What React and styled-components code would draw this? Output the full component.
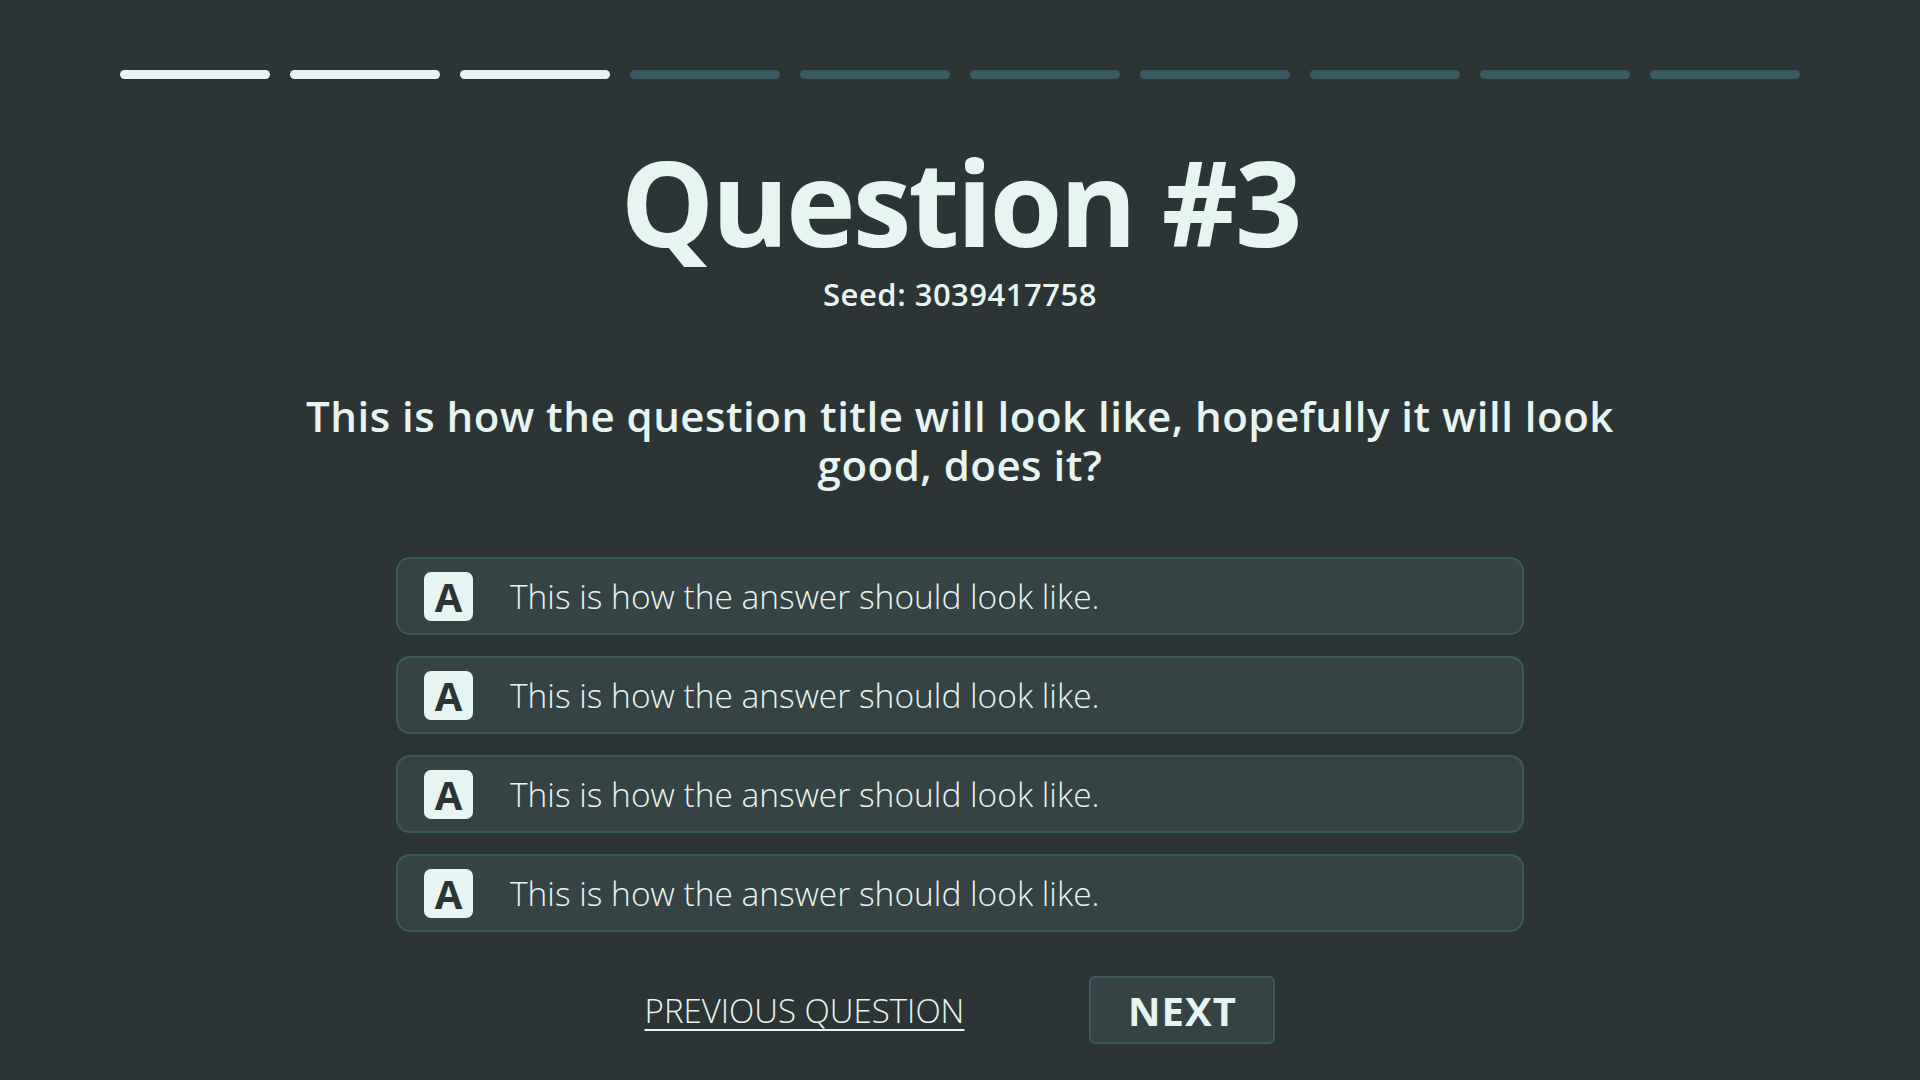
import React from "react";
import styled, { createGlobalStyle } from "styled-components";

const GlobalStyle = createGlobalStyle`
  html, body {
    margin: 0;
    padding: 0;
    background: #2c3435;
  }
  body {
    font-family: "Open Sans", "Noto Sans", sans-serif;
    color: #e6f5f2;
  }
`;

const Page = styled.main`
  width: 1920px;
  height: 1080px;
  box-sizing: border-box;
  padding: 70px 120px 0;
  display: flex;
  flex-direction: column;
  align-items: center;
`;

const Progress = styled.div`
  width: 100%;
  display: grid;
  grid-template-columns: repeat(10, 1fr);
  gap: 20px;
`;

const Step = styled.div`
  height: 9px;
  border-radius: 5px;
  background: ${p => (p.done ? "#e6f5f2" : "#3a5a62")};
`;

const Title = styled.h1`
  margin: 64px 0 0;
  font-size: 118px;
  font-weight: 700;
  line-height: 1;
  letter-spacing: -3px;
`;

const Seed = styled.p`
  margin: 12px 0 0;
  font-size: 31px;
  line-height: 42px;
  font-weight: 600;
  letter-spacing: 0.5px;
`;

const QuestionText = styled.h2`
  margin: 76px 0 0;
  width: 1360px;
  text-align: center;
  font-size: 42px;
  font-weight: 600;
  line-height: 49px;
  letter-spacing: 0.5px;
`;

const AnswerList = styled.ul`
  list-style: none;
  margin: 68px 0 0;
  padding: 0;
  width: 1128px;
  display: flex;
  flex-direction: column;
  gap: 21px;
`;

const Answer = styled.li`
  height: 78px;
  box-sizing: border-box;
  padding: 0 26px;
  display: flex;
  align-items: center;
  gap: 37px;
  background: #354344;
  border: 2px solid #3a5a62;
  border-radius: 14px;
`;

const Badge = styled.span`
  width: 49px;
  height: 49px;
  flex: none;
  border-radius: 7px;
  background: #e6f5f2;
  color: #2c3435;
  display: flex;
  align-items: center;
  justify-content: center;
  font-size: 40px;
  font-weight: 700;
`;

const AnswerText = styled.span`
  font-size: 33.5px;
  font-weight: 300;
`;

const Footer = styled.div`
  margin-top: 44px;
  display: flex;
  align-items: center;
  gap: 125px;
`;

const PrevLink = styled.a`
  color: #e6f5f2;
  font-size: 33px;
  font-weight: 300;
  text-decoration: underline;
  text-underline-offset: 6px;
  text-decoration-thickness: 2px;
  cursor: pointer;
`;

const NextButton = styled.button`
  width: 186px;
  height: 68px;
  box-sizing: border-box;
  background: #354344;
  border: 2px solid #3a5a62;
  border-radius: 6px;
  color: #e6f5f2;
  font-family: inherit;
  font-size: 40px;
  font-weight: 700;
  letter-spacing: 1px;
  cursor: pointer;
`;

const answers = [
  "This is how the answer should look like.",
  "This is how the answer should look like.",
  "This is how the answer should look like.",
  "This is how the answer should look like.",
];

export default function App() {
  const current = 3;
  return (
    <>
      <GlobalStyle />
      <Page>
        <Progress>
          {Array.from({ length: 10 }).map((_, i) => (
            <Step key={i} done={i < current} />
          ))}
        </Progress>
        <Title>Question #{current}</Title>
        <Seed>Seed: 3039417758</Seed>
        <QuestionText>
          This is how the question title will look like, hopefully it will look
          good, does it?
        </QuestionText>
        <AnswerList>
          {answers.map((a, i) => (
            <Answer key={i}>
              <Badge>A</Badge>
              <AnswerText>{a}</AnswerText>
            </Answer>
          ))}
        </AnswerList>
        <Footer>
          <PrevLink>PREVIOUS QUESTION</PrevLink>
          <NextButton>NEXT</NextButton>
        </Footer>
      </Page>
    </>
  );
}
